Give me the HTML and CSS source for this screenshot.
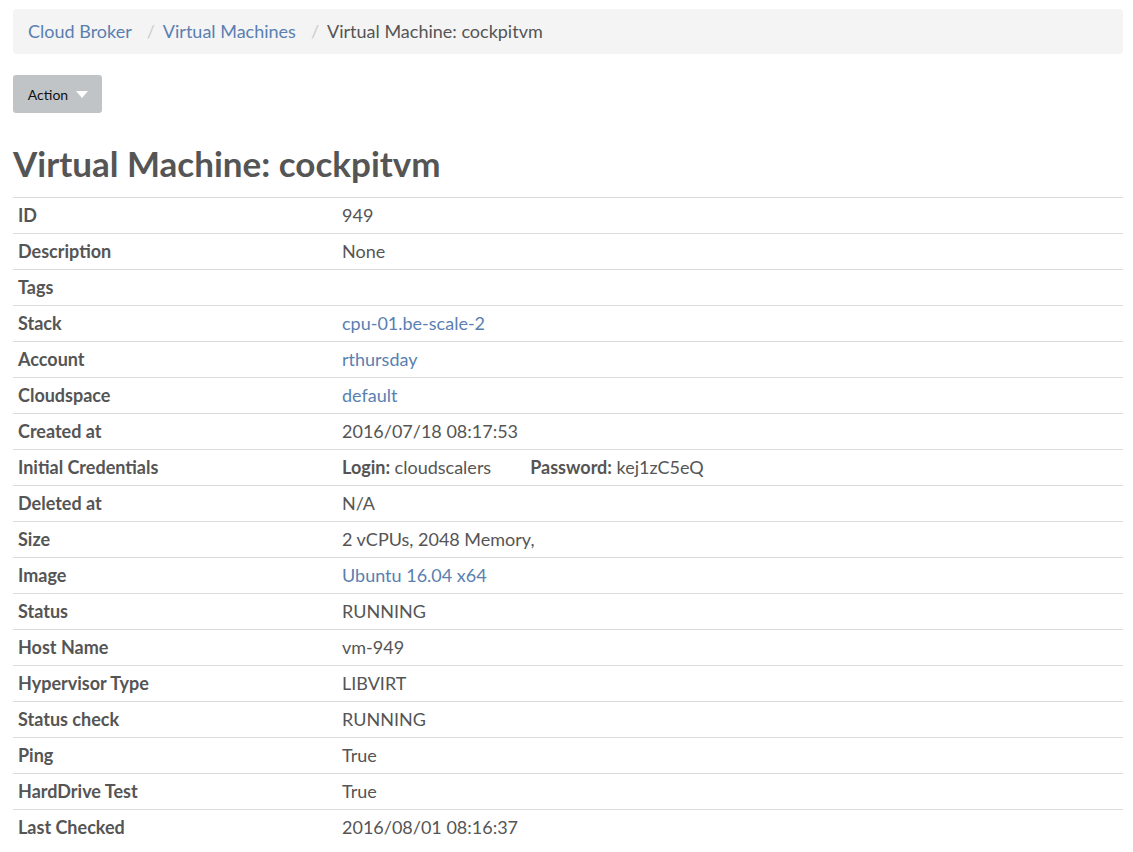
FILE: index.html
```html
<!DOCTYPE html>
<html>
<head>
<meta charset="utf-8">
<link rel="stylesheet" href="styles.css">
</head>
<body>
<div class="page">
  <nav class="breadcrumb">
    <a href="#">Cloud Broker</a>
    <span class="sep">/</span>
    <a href="#">Virtual Machines</a>
    <span class="sep">/</span>
    <span class="current">Virtual Machine: cockpitvm</span>
  </nav>
  <div class="actions">
    <button class="btn">Action <span class="caret"></span></button>
  </div>
  <h1 class="title">Virtual Machine: cockpitvm</h1>
  <table class="details">
    <tr><th>ID</th><td>949</td></tr>
    <tr><th>Description</th><td>None</td></tr>
    <tr><th>Tags</th><td></td></tr>
    <tr><th>Stack</th><td><a href="#">cpu-01.be-scale-2</a></td></tr>
    <tr><th>Account</th><td><a href="#">rthursday</a></td></tr>
    <tr><th>Cloudspace</th><td><a href="#">default</a></td></tr>
    <tr><th>Created at</th><td>2016/07/18 08:17:53</td></tr>
    <tr><th>Initial Credentials</th><td><span class="cred"><b>Login:</b> cloudscalers</span><span class="cred"><b>Password:</b> kej1zC5eQ</span></td></tr>
    <tr><th>Deleted at</th><td>N/A</td></tr>
    <tr><th>Size</th><td>2 vCPUs, 2048 Memory,</td></tr>
    <tr><th>Image</th><td><a href="#">Ubuntu 16.04 x64</a></td></tr>
    <tr><th>Status</th><td>RUNNING</td></tr>
    <tr><th>Host Name</th><td>vm-949</td></tr>
    <tr><th>Hypervisor Type</th><td>LIBVIRT</td></tr>
    <tr><th>Status check</th><td>RUNNING</td></tr>
    <tr><th>Ping</th><td>True</td></tr>
    <tr><th>HardDrive Test</th><td>True</td></tr>
    <tr><th>Last Checked</th><td>2016/08/01 08:16:37</td></tr>
  </table>
</div>
</body>
</html>
```

FILE: styles.css
```css
html, body {
  margin: 0;
  padding: 0;
  background: #fff;
}
body {
  font-family: Lato, "Open Sans", sans-serif;
  font-size: 18px;
  color: #555;
}
.page {
  width: 1110px;
  padding: 9px 0 0 13px;
}
a {
  color: #5a7fb1;
  text-decoration: none;
}
.breadcrumb {
  background: #f4f4f4;
  border-radius: 4px;
  height: 45px;
  box-sizing: border-box;
  padding: 0 15px 1px;
  display: flex;
  align-items: center;
  line-height: 1;
}
.breadcrumb .sep {
  color: #ccc;
  padding: 0 8px 0 15px;
}
.breadcrumb .current {
  color: #555;
}
.actions {
  margin-top: 21px;
}
.btn {
  font-family: Lato, "Open Sans", sans-serif;
  font-size: 14px;
  color: #111;
  background: #c0c4c7;
  border: none;
  border-radius: 3px;
  height: 38px;
  width: 89px;
  padding: 0 0 0 1px;
  display: flex;
  align-items: center;
  justify-content: center;
  gap: 8px;
}
.caret {
  width: 0;
  height: 0;
  border-left: 6px solid transparent;
  border-right: 6px solid transparent;
  border-top: 7px solid #fff;
  margin-top: 1px;
}
.title {
  font-size: 35px;
  font-weight: 700;
  color: #555;
  margin: 25px 0 0 0;
  line-height: 50px;
  height: 59px;
}
.details {
  width: 1110px;
  border-collapse: collapse;
  margin-top: 0;
}
.details th, .details td {
  border-top: 1px solid #dcdcdc;
  height: 36px;
  box-sizing: border-box;
  padding: 0 5px 2px;
  text-align: left;
  vertical-align: middle;
  line-height: 20px;
}
.details th {
  width: 324px;
  font-weight: 700;
}
.details td {
  font-weight: 400;
}
.cred {
  display: inline-block;
}
.cred + .cred {
  margin-left: 39px;
}
.cred b {
  font-weight: 700;
}
```
